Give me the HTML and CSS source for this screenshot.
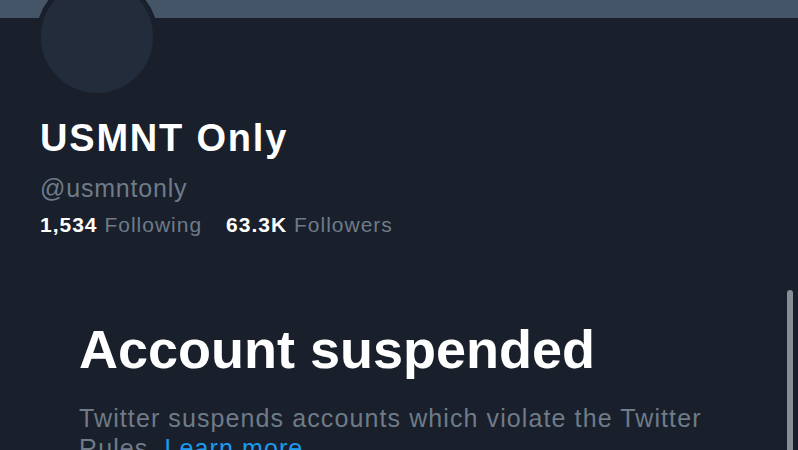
FILE: index.html
```html
<!DOCTYPE html>
<html>
<head>
<meta charset="utf-8">
<link rel="stylesheet" href="styles.css">
</head>
<body>
<div class="page">
  <div class="banner"></div>
  <div class="avatar"></div>
  <div class="profile">
    <h1 class="name">USMNT Only</h1>
    <div class="handle">@usmntonly</div>
    <div class="stats">
      <span class="stat"><b>1,534</b> Following</span>
      <span class="stat"><b>63.3K</b> Followers</span>
    </div>
  </div>
  <div class="suspended">
    <h2 class="title">Account suspended</h2>
    <p class="desc">Twitter suspends accounts which violate the Twitter Rules. <a class="link">Learn more</a></p>
  </div>
  <div class="scrollbar"></div>
</div>
</body>
</html>
```
FILE: styles.css
```css
html, body {
  margin: 0;
  padding: 0;
  background: #19202b;
  overflow: hidden;
}
.page {
  position: relative;
  width: 798px;
  height: 450px;
  overflow: hidden;
  font-family: "Liberation Sans", Arial, sans-serif;
  background: #19202b;
}
.banner {
  height: 18px;
  background: #445567;
}
.avatar {
  position: absolute;
  left: 36px;
  top: -24px;
  width: 112px;
  height: 112px;
  border-radius: 50%;
  background: #222c3a;
  border: 5px solid #19202b;
}
.profile {
  padding: 98px 0 0 40px;
}
.name {
  margin: 0;
  font-size: 38px;
  font-weight: 700;
  color: #ffffff;
  line-height: 44px;
  letter-spacing: 1.8px;
}
.handle {
  margin-top: 15px;
  font-size: 25px;
  color: #6f7b88;
  line-height: 26px;
  letter-spacing: 0.8px;
}
.stats {
  margin-top: 11px;
  display: flex;
  gap: 24px;
  font-size: 21px;
  color: #6f7b88;
  line-height: 26px;
  letter-spacing: 1px;
}
.stats b {
  color: #ffffff;
}
.suspended {
  padding: 81px 0 0 79px;
}
.title {
  margin: 0;
  font-size: 54px;
  font-weight: 700;
  color: #ffffff;
  line-height: 60px;
}
.desc {
  margin: 24px 0 0;
  width: 680px;
  font-size: 25px;
  line-height: 30px;
  color: #6f7b88;
  letter-spacing: 1.1px;
}
.link {
  color: #1d9bf0;
}
.scrollbar {
  position: absolute;
  left: 787px;
  top: 290px;
  width: 6px;
  height: 180px;
  border-radius: 3px;
  background: #8a8d93;
}
```
